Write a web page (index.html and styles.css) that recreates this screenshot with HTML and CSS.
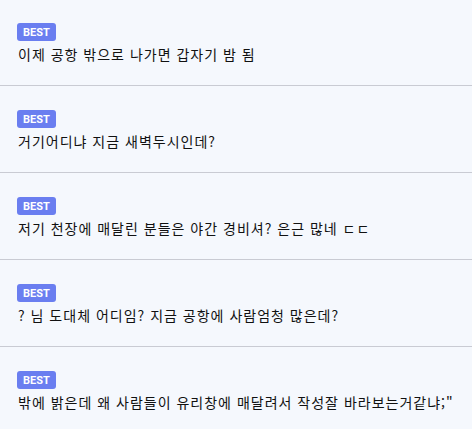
FILE: index.html
```html
<!DOCTYPE html>
<html lang="ko">
<head>
<meta charset="utf-8">
<link rel="stylesheet" href="styles.css">
</head>
<body>
<ul class="list">
  <li class="item"><span class="badge">BEST</span><p class="text">이제 공항 밖으로 나가면 갑자기 밤 됨</p></li>
  <li class="item"><span class="badge">BEST</span><p class="text">거기어디냐 지금 새벽두시인데?</p></li>
  <li class="item"><span class="badge">BEST</span><p class="text">저기 천장에 매달린 분들은 야간 경비셔? 은근 많네 ㄷㄷ</p></li>
  <li class="item"><span class="badge">BEST</span><p class="text">? 님 도대체 어디임? 지금 공항에 사람엄청 많은데?</p></li>
  <li class="item"><span class="badge">BEST</span><p class="text">밖에 밝은데 왜 사람들이 유리창에 매달려서 작성잘 바라보는거같냐;"</p></li>
</ul>
</body>
</html>
```
FILE: styles.css
```css
html, body {
  margin: 0;
  padding: 0;
  background: #f5f8fd;
}
body {
  font-family: "Noto Sans CJK KR", "Noto Sans", sans-serif;
  color: #111;
}
.list {
  list-style: none;
  margin: 0;
  padding: 0;
}
.item {
  display: flex;
  flex-direction: column;
  align-items: flex-start;
  padding: 24px 17px 21px;
  border-bottom: 1px solid #c9cbd3;
}
.item:first-child {
  padding-top: 23px;
}
.badge {
  display: inline-flex;
  align-items: center;
  height: 18px;
  padding: 0 6px;
  border-radius: 3px;
  background: #6a7ef0;
  color: #fff;
  font-family: Roboto, "Liberation Sans", sans-serif;
  font-weight: bold;
  font-size: 11px;
}
.text {
  margin: 3px 0 0 1px;
  font-size: 14px;
  line-height: 20px;
  letter-spacing: 1px;
  white-space: nowrap;
}
```
